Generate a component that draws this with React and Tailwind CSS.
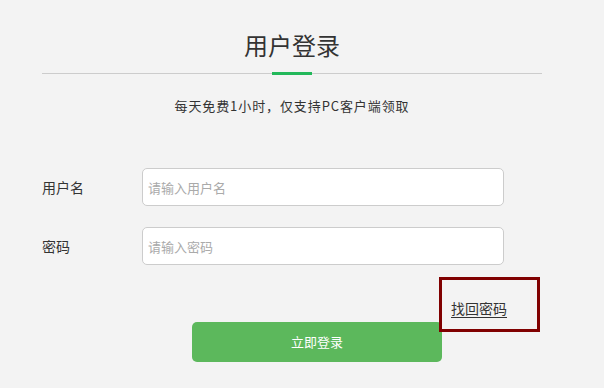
import React from "react";

export default function App() {
  const font = { fontFamily: '"Noto Sans CJK SC", "Liberation Sans", sans-serif' };
  return (
    <div className="w-[604px] h-[388px] bg-[#f3f3f3] overflow-hidden text-[#333]" style={font}>
      <div className="ml-[42px] w-[500px]">
        <div className="mt-[29px] h-[32px] leading-[32px] text-[24px] text-center text-[#333]">用户登录</div>
        <div className="mt-[12px] h-px bg-[#cccccc]" />
        <div className="relative mx-auto -mt-[2px] w-10 h-[3px] bg-[#22b85a]" />
        <div className="mt-[21px] h-[20px] leading-[20px] text-[13px] text-center tracking-[0.9px]">每天免费1小时，仅支持PC客户端领取</div>

        <div className="mt-[52px] flex items-center">
          <div className="w-[100px] text-[14px]">用户名</div>
          <input
            className="w-[362px] h-[38px] border border-[#cccccc] rounded-[5px] bg-white px-[5px] text-[13px] outline-none placeholder:text-[#aaa]"
            placeholder="请输入用户名"
            style={font}
          />
        </div>
        <div className="mt-[21px] flex items-center">
          <div className="w-[100px] text-[14px]">密码</div>
          <input
            className="w-[362px] h-[38px] border border-[#cccccc] rounded-[5px] bg-white px-[5px] text-[13px] outline-none placeholder:text-[#aaa]"
            placeholder="请输入密码"
            style={font}
          />
        </div>

        <div className="mt-[33px] ml-[409px] relative w-fit">
          <a href="#" className="block h-[20px] leading-[20px] text-[14px] text-[#333] underline underline-offset-[3px]">找回密码</a>
          <span className="absolute left-[-12px] top-[-21px] w-[101px] h-[55px] border-[3px] border-[#800000] pointer-events-none" />
        </div>

        <button className="mt-[4px] ml-[150px] w-[250px] h-[40px] rounded-[5px] bg-[#5cb85c] text-white text-[13px]" style={font}>
          立即登录
        </button>
      </div>
    </div>
  );
}
